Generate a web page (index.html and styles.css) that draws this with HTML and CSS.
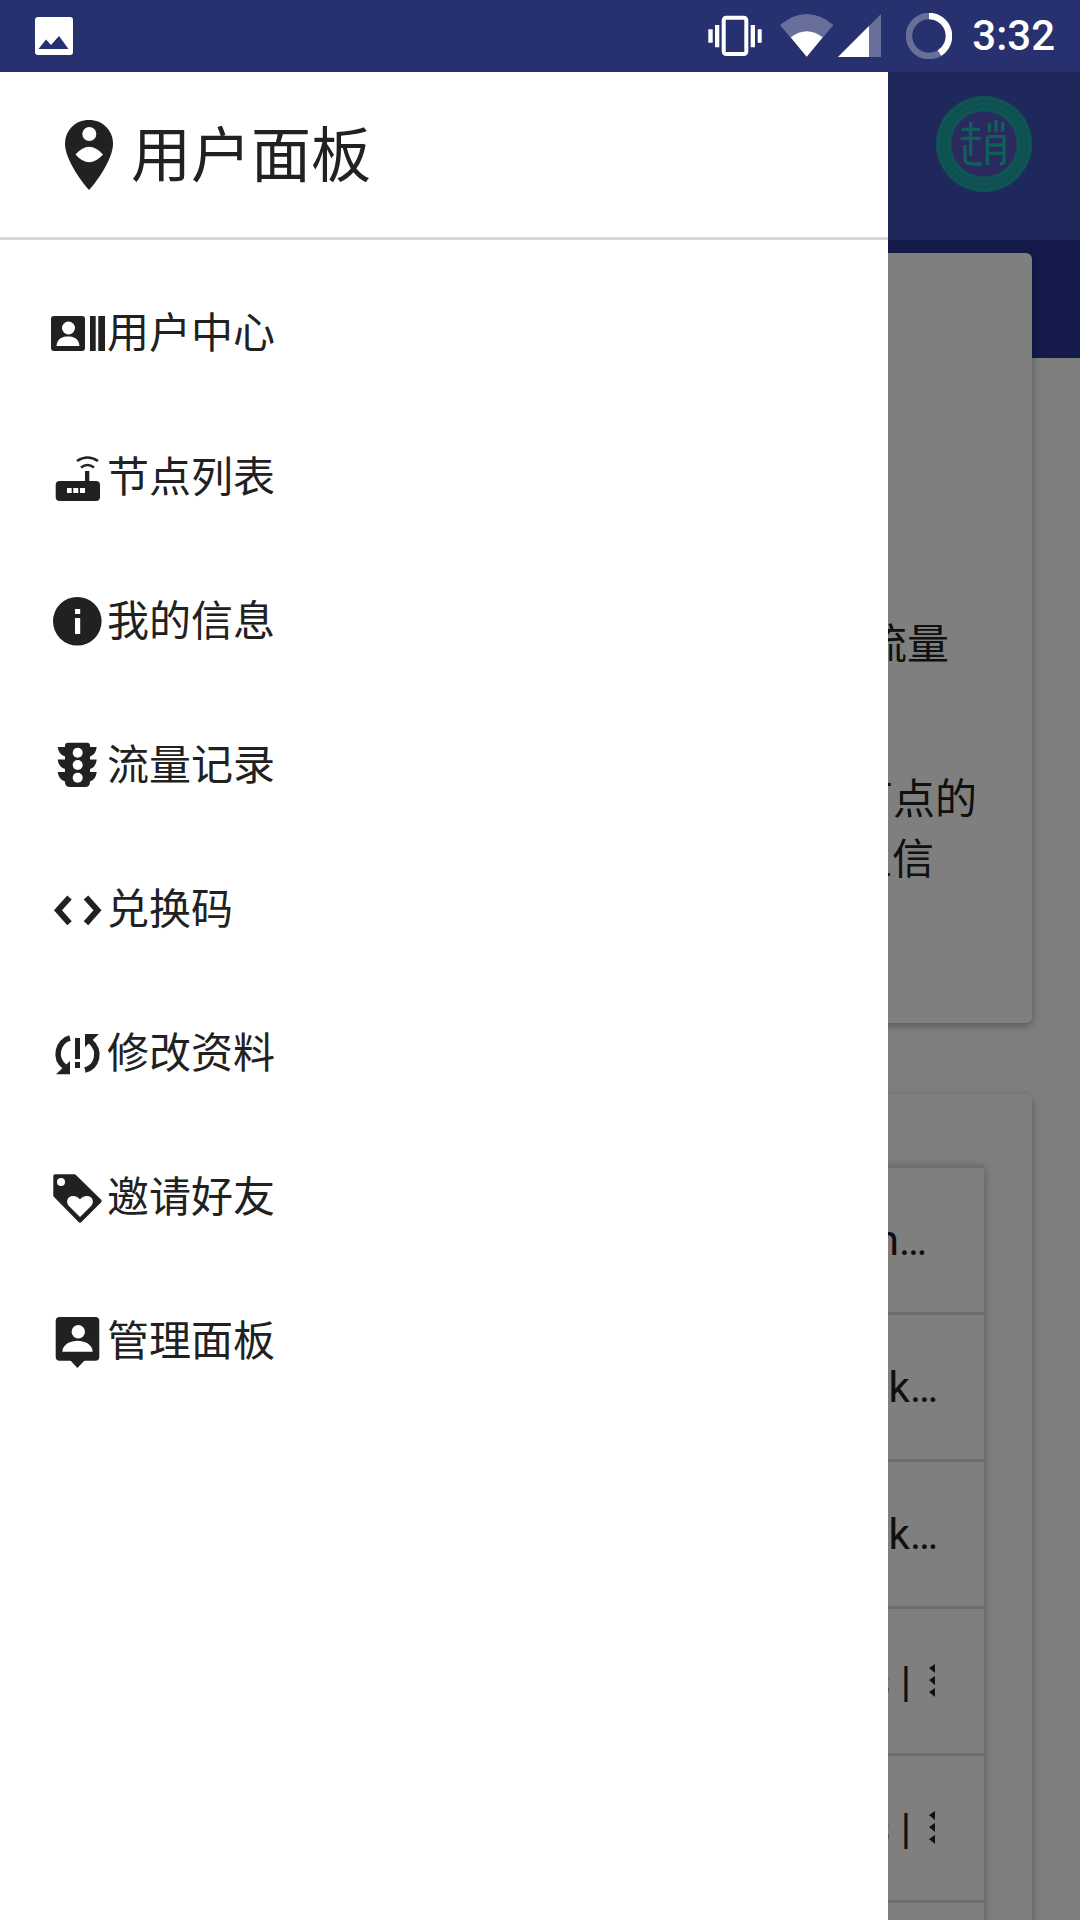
FILE: index.html
```html
<!DOCTYPE html>
<html lang="zh-CN">
  <head>
    <meta charset="UTF-8" />
    <meta name="viewport" content="width=device-width, initial-scale=1.0" />
    <title>用户面板</title>
    <link rel="stylesheet" href="styles.css">
  </head>
  <body>
    <div id="phone">
      <div id="status-bar">
        <svg class="status-image" viewBox="0 0 38 38" width="38" height="38">
          <rect width="38" height="38" rx="3" fill="#fff" />
          <polygon points="3.5,32 11,22.5 16,28 24,19 33.5,32" fill="#27316f" />
        </svg>
        <div class="status-right">
          <svg class="status-vibrate" viewBox="0 0 54 44" width="54" height="44">
            <rect x="15.7" y="3.7" width="22.6" height="36.3" rx="2.5" fill="none" stroke="#fff" stroke-width="4" />
            <path d="M.3 15.3h4.4v13.4H.3zM7 11h4.3v22.3H7zM42.7 11H47v22.3h-4.3zM49.7 15.3h4v13.4h-4z" fill="#fff" />
          </svg>
          <svg class="status-wifi" viewBox="0 0 54 44" width="54" height="44">
            <path d="M26.7 42.7 0 11Q26.7 -11 53.4 11Z" fill="#fff" opacity=".3" />
            <path d="M26.7 42.7 10.7 23.3Q26.7 11 42.7 23.3Z" fill="#fff" />
          </svg>
          <svg class="status-signal" viewBox="0 0 43 44" width="43" height="44">
            <polygon points="0,43 43,0 43,43" fill="#fff" opacity=".3" />
            <polygon points="0,43 31,12 31,43" fill="#fff" />
          </svg>
          <svg class="status-battery" viewBox="0 0 46 46" width="46" height="46">
            <circle cx="23" cy="23" r="20" fill="none" stroke="#fff" stroke-width="6.5" opacity=".3" />
            <path d="M23 3A20 20 0 0 1 33.5 40" fill="none" stroke="#fff" stroke-width="6.5" />
          </svg>
          <span class="status-time">3:32</span>
        </div>
      </div>

      <div id="screen">
        <div id="main">
          <div class="app-bar">
            <svg class="logo" viewBox="18 18 288 288" width="96" height="96">
              <circle cx="162" cy="162" r="144" fill="#1ca8a6" />
              <circle cx="162" cy="162" r="128" fill="none" stroke="#2a92a8" stroke-width="7" stroke-dasharray="9 7" />
              <circle cx="162" cy="162" r="114" fill="none" stroke="#2a92a8" stroke-width="6" stroke-dasharray="6 10" />
              <circle cx="162" cy="162" r="101" fill="#5454bc" stroke="#1cb0a8" stroke-width="5" />
              <g fill="none" stroke="#1cc0b0" stroke-width="10">
                <path d="M122 95V140M95 118H150M92 145H152M122 145V198M105 165V205Q105 222 125 222H155" />
                <path d="M178 100V125M198 90V125M218 95V125M172 140H222V213Q222 222 210 222M172 140V225M172 165H222M172 190H222" />
              </g>
            </svg>
          </div>
          <div class="hero"></div>
          <div class="page-content">
            <div class="card card-notice">
              <p class="notice-line">剩余流量</p>
              <p class="notice-line notice-gap">请选择节点的</p>
              <p class="notice-line notice-short">主信</p>
            </div>
            <div class="card card-list">
              <ul class="link-list">
                <li class="link-row row-n">Clash for Win…</li>
                <li class="link-row row-k">Shadowrock…</li>
                <li class="link-row row-k">Shadowrock…</li>
                <li class="link-row">
                  <span>s |</span>
                  <svg class="more-mark" viewBox="0 0 7 34" width="7" height="34">
                    <path d="M0 4 6 0V9ZM0 16 6 12V21ZM0 28 6 24V33Z" fill="#212121" />
                  </svg>
                </li>
                <li class="link-row">
                  <span>s |</span>
                  <svg class="more-mark" viewBox="0 0 7 34" width="7" height="34">
                    <path d="M0 4 6 0V9ZM0 16 6 12V21ZM0 28 6 24V33Z" fill="#212121" />
                  </svg>
                </li>
                <li class="link-row"></li>
              </ul>
            </div>
          </div>
        </div>

        <div id="scrim"></div>

        <div id="drawer">
          <div class="drawer-header">
            <svg class="header-icon" viewBox="0 0 54 72" width="54" height="72">
              <path d="M27 1C13 1 3 11.5 3 25 3 41 22 66 27 71 32 66 51 41 51 25 51 11.5 41 1 27 1Z" fill="#212121" />
              <circle cx="27.3" cy="15" r="7" fill="#fff" />
              <path d="M13.5 35.5Q27 20 41 35.5 27 51 13.5 35.5Z" fill="#fff" />
            </svg>
            <h1 class="drawer-title">用户面板</h1>
          </div>

          <ul class="drawer-menu">
            <li class="menu-item">
              <svg class="menu-icon" viewBox="0 -2 56 56" width="56" height="56">
                <rect x="1" y="9" width="34" height="35" rx="3" fill="#212121" />
                <circle cx="18.5" cy="21" r="6.5" fill="#fff" />
                <path d="M6.5 39C7 31 13 29.5 18 29.5S29 31 29.5 39Z" fill="#fff" />
                <rect x="40" y="9" width="5.7" height="35" fill="#212121" />
                <rect x="48.3" y="9" width="6.7" height="35" fill="#212121" />
              </svg>
              <span>用户中心</span>
            </li>
            <li class="menu-item">
              <svg class="menu-icon" viewBox="0 -2 56 56" width="56" height="56">
                <rect x="5.7" y="30" width="44.3" height="20" rx="4" fill="#212121" />
                <rect x="35" y="20" width="4.3" height="11" fill="#212121" />
                <path d="M17 37h4.7v5H17zM23.3 37h5v5h-5zM30 37h5v5h-5z" fill="#fff" />
                <path d="M27 10Q37.5 3 48 10M31 16.5Q37.5 11.5 44 16.5" fill="none" stroke="#212121" stroke-width="2.6" />
              </svg>
              <span>节点列表</span>
            </li>
            <li class="menu-item">
              <svg class="menu-icon" viewBox="0 -2 56 56" width="56" height="56">
                <circle cx="27.3" cy="26.3" r="24.3" fill="#212121" />
                <path d="M25 14h5.2v5H25zM25 23h5.2v16H25z" fill="#fff" />
              </svg>
              <span>我的信息</span>
            </li>
            <li class="menu-item">
              <svg class="menu-icon" viewBox="0 -2 56 56" width="56" height="56">
                <path d="M18 3.7H37Q40 3.7 40 7V43Q40 48 35 48H20Q15 48 15 43V7Q15 3.7 18 3.7Z" fill="#212121" />
                <path d="M15 8H7.7Q8.5 15.5 15 17.5ZM40 8H46.7Q46 15.5 40 17.5ZM15 20.5H7.7Q8.5 28 15 30ZM40 20.5H46.7Q46 28 40 30ZM15 33H7.7Q8.5 40.5 15 42.5ZM40 33H46.7Q46 40.5 40 42.5Z" fill="#212121" />
                <circle cx="27.7" cy="13.7" r="5" fill="#fff" />
                <circle cx="27.7" cy="26" r="5" fill="#fff" />
                <circle cx="27.7" cy="38.7" r="5" fill="#fff" />
              </svg>
              <span>流量记录</span>
            </li>
            <li class="menu-item">
              <svg class="menu-icon" viewBox="0 -2 56 56" width="56" height="56">
                <path d="M19.5 14.5 8 27.3 19.5 40.2M36 14.5 47.5 27.3 36 40.2" fill="none" stroke="#212121" stroke-width="6" />
              </svg>
              <span>兑换码</span>
            </li>
            <li class="menu-item">
              <svg class="menu-icon" viewBox="0 -2 56 56" width="56" height="56">
                <path d="M20 11C8 14 3 31 15 40" fill="none" stroke="#212121" stroke-width="5.5" />
                <polygon points="6,47.3 20,47.3 20,34" fill="#212121" />
                <path d="M35 43C47 40 52 24 40 14" fill="none" stroke="#212121" stroke-width="5.5" />
                <polygon points="35,7 49,7 35,20" fill="#212121" />
                <path d="M25 11h5v21h-5zM25 35h5v6h-5z" fill="#212121" />
              </svg>
              <span>修改资料</span>
            </li>
            <li class="menu-item">
              <svg class="menu-icon" viewBox="0 -2 56 56" width="56" height="56">
                <path d="M5 5H24.5L50 30 30 50 5 24.5Z" fill="#212121" stroke="#212121" stroke-width="3.4" stroke-linejoin="round" />
                <circle cx="11" cy="11" r="4" fill="#fff" />
                <path d="M30 46 18.5 34.5C15.5 31 17.5 25 23 25 26 25 28.5 26.5 30 28.5 31.5 26.5 34 25 37 25 42.5 25 44.5 31 41.5 34.5Z" fill="#fff" />
              </svg>
              <span>邀请好友</span>
            </li>
            <li class="menu-item">
              <svg class="menu-icon" viewBox="0 -2 56 56" width="56" height="56">
                <rect x="5.7" y="2" width="43.6" height="43.7" rx="4" fill="#212121" />
                <polygon points="20,45 35,45 27.4,53" fill="#212121" />
                <circle cx="28.3" cy="16.7" r="6.7" fill="#fff" />
                <path d="M12.3 36.7C12.5 29 21 25.7 27.5 25.7S42.5 29 42.7 36.7Z" fill="#fff" />
              </svg>
              <span>管理面板</span>
            </li>
          </ul>
        </div>
      </div>
    </div>
  </body>
</html>
```

FILE: styles.css
```css
* {
  margin: 0;
  padding: 0;
  box-sizing: border-box;
}
html,
body {
  width: 100%;
  height: 100%;
}
body {
  overflow: hidden;
}
#phone {
  width: 1080px;
  height: 1920px;
  display: flex;
  flex-direction: column;
  font-family: Roboto, "Noto Sans CJK SC", sans-serif;
  color: #212121;
}

/* status bar */
#status-bar {
  height: 72px;
  flex-shrink: 0;
  display: flex;
  align-items: center;
  justify-content: space-between;
  padding: 0 25px 0 35px;
  background-color: #27316f;
  color: #fff;
}
.status-right {
  display: flex;
  align-items: center;
}
.status-wifi {
  margin-left: 18px;
}
.status-signal {
  margin-left: 4px;
}
.status-battery {
  margin-left: 25px;
}
.status-time {
  margin-left: 20px;
  font-size: 42px;
  font-weight: 500;
  line-height: 72px;
}

#screen {
  position: relative;
  flex: 1;
  overflow: hidden;
}

/* page behind the drawer */
#main {
  height: 100%;
  background-color: #fdfdfd;
}
.app-bar {
  height: 168px;
  display: flex;
  align-items: center;
  justify-content: flex-end;
  padding: 0 48px 24px 0;
  background-color: #3f51b5;
}
.hero {
  height: 118px;
  background-color: #283593;
}
.page-content {
  padding: 0 48px;
}
.card {
  background-color: #fff;
  border-radius: 6px;
  box-shadow: 0 3px 8px rgba(0, 0, 0, 0.3);
}
.card-notice {
  height: 770px;
  margin-top: -105px;
  padding-top: 362px;
  font-size: 42px;
  line-height: 60px;
  text-align: right;
}
.notice-line {
  padding-right: 83px;
}
.notice-gap {
  margin-top: 95px;
  padding-right: 55px;
}
.notice-short {
  padding-right: 98px;
}
.card-list {
  margin-top: 71px;
  padding: 71px 48px 0;
}
.link-list {
  list-style: none;
  box-shadow: 0 2px 10px rgba(0, 0, 0, 0.3);
}
.link-row {
  height: 147px;
  display: flex;
  align-items: center;
  justify-content: flex-end;
  gap: 18px;
  padding-right: 48px;
  border-top: 3px solid #dcdcdc;
  font-size: 42px;
  white-space: nowrap;
}
.row-n {
  padding-right: 57px;
}
.row-k {
  padding-right: 46px;
}

#scrim {
  position: absolute;
  top: 0;
  left: 0;
  width: 100%;
  height: 100%;
  background-color: rgba(0, 0, 0, 0.5);
}

/* navigation drawer */
#drawer {
  position: absolute;
  top: 0;
  left: 0;
  width: 888px;
  height: 100%;
  background-color: #fff;
}
.drawer-header {
  height: 168px;
  display: flex;
  align-items: center;
  padding-left: 62px;
  border-bottom: 3px solid #d9d9d9;
}
.header-icon {
  margin-right: 15px;
}
.drawer-title {
  margin-bottom: 8px;
  font-size: 60px;
  font-weight: 400;
}
.drawer-menu {
  list-style: none;
  padding-top: 21px;
}
.menu-item {
  height: 144px;
  display: flex;
  align-items: center;
  gap: 1px;
  padding-left: 50px;
  font-size: 42px;
}
.menu-item span {
  margin-bottom: 7px;
}
```
